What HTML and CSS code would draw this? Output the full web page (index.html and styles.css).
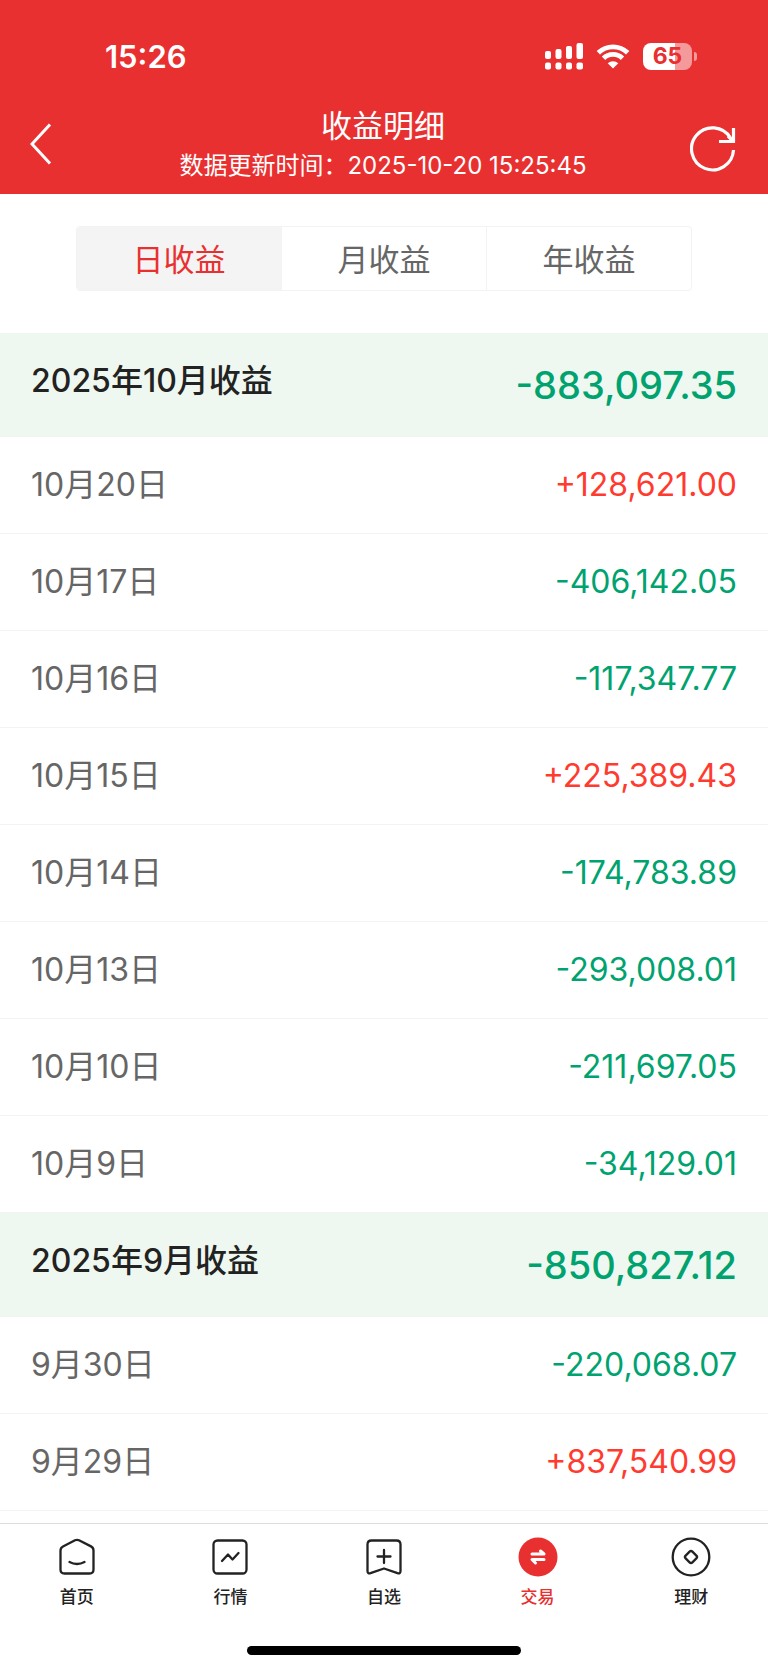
FILE: index.html
```
<!DOCTYPE html>
<html lang="zh-CN">
<head>
<meta charset="UTF-8">
<meta name="viewport" content="width=device-width, initial-scale=1.0">
<title>收益明细</title>
<link rel="stylesheet" href="styles.css">
</head>
<body>
<header class="header">
    <div class="status">
        <span class="clock">15:26</span>
        <div class="status-icons">
            <svg width="38" height="27" viewBox="0 0 38 27" fill="#fff">
                <rect x="0" y="8" width="6" height="8" rx="2"/>
                <rect x="10.5" y="6" width="6" height="10" rx="2"/>
                <rect x="21" y="3" width="6" height="13" rx="2"/>
                <rect x="31.5" y="0" width="6.5" height="16" rx="2"/>
                <rect x="0" y="19.5" width="6" height="7" rx="2"/>
                <rect x="10.5" y="19.5" width="6" height="7" rx="2"/>
                <rect x="21" y="19.5" width="6" height="7" rx="2"/>
                <rect x="31.5" y="19.5" width="6.5" height="7" rx="2"/>
            </svg>
            <svg width="34" height="27" viewBox="0 0 34 27">
                <path d="M2.3 9.800a21 21 0 0 1 29.4 0M7.500 15.300a13.500 13.500 0 0 1 19 0" fill="none" stroke="#fff" stroke-width="4.800"/>
                <path d="M17 25.5l-5.3-5.2a7.6 7.6 0 0 1 10.6 0z" fill="#fff"/>
            </svg>
            <div class="battery"><span>65</span></div>
        </div>
    </div>
    <div class="navbar">
        <button class="icon-btn" type="button" aria-label="返回">
            <svg width="22" height="42" viewBox="0 0 22 42" fill="none" stroke="#fff" stroke-width="3">
                <path d="M20 1.5L2 21l18 19.5"/>
            </svg>
        </button>
        <div class="heading">
            <h1>收益明细</h1>
            <p>数据更新时间：2025-10-20 15:25:45</p>
        </div>
        <button class="icon-btn refresh" type="button" aria-label="刷新">
            <svg width="46" height="46" viewBox="0 0 46 46" fill="none" stroke="#fff" stroke-width="3.200">
                <path d="M43.5 24A21 21 0 1 1 40.500 12"/>
                <path d="M43.500 2v13.500H29M43.500 15.500L38 10"/>
            </svg>
        </button>
    </div>
</header>

<main>
    <div class="tabs">
        <button class="active" type="button">日收益</button>
        <button type="button">月收益</button>
        <button type="button">年收益</button>
    </div>

    <table class="profit">
        <tbody>
            <tr class="month"><th>2025年10月收益</th><td class="down">-883,097.35</td></tr>
            <tr><th>10月20日</th><td class="up">+128,621.00</td></tr>
            <tr><th>10月17日</th><td class="down">-406,142.05</td></tr>
            <tr><th>10月16日</th><td class="down">-117,347.77</td></tr>
            <tr><th>10月15日</th><td class="up">+225,389.43</td></tr>
            <tr><th>10月14日</th><td class="down">-174,783.89</td></tr>
            <tr><th>10月13日</th><td class="down">-293,008.01</td></tr>
            <tr><th>10月10日</th><td class="down">-211,697.05</td></tr>
            <tr><th>10月9日</th><td class="down">-34,129.01</td></tr>
        </tbody>
        <tbody>
            <tr class="month"><th>2025年9月收益</th><td class="down">-850,827.12</td></tr>
            <tr><th>9月30日</th><td class="down">-220,068.07</td></tr>
            <tr><th>9月29日</th><td class="up">+837,540.99</td></tr>
        </tbody>
    </table>
</main>

<!-- bottom navigation -->
<footer class="footer">
    <nav class="tabbar">
        <a href="#">
            <svg width="40" height="40" viewBox="0 0 40 40">
                <path d="M3.500 13.500Q3.500 10.700 6 9.400L18 3.300Q20 2.300 22 3.300L34 9.400Q36.500 10.700 36.500 13.500V32.500Q36.500 36.500 32.500 36.500H7.500Q3.500 36.500 3.500 32.500Z"/>
                <path d="M12.500 25q7.500 4 15 0"/>
            </svg>
            首页
        </a>
        <a href="#">
            <svg width="40" height="40" viewBox="0 0 40 40">
                <rect x="3.500" y="3.500" width="33" height="33" rx="4"/>
                <path d="M12 24l6-6.500 4.500 5 6-6.500"/>
            </svg>
            行情
        </a>
        <a href="#">
            <svg width="40" height="40" viewBox="0 0 40 40">
                <path d="M7.500 3.500H32.500Q36.500 3.500 36.500 7.500V34Q36.500 37 33.500 36.200L20 31.500 6.500 36.200Q3.500 37 3.500 34V7.500Q3.500 3.500 7.500 3.500Z"/>
                <path d="M20 13v13M13.500 19.500h13"/>
            </svg>
            自选
        </a>
        <a class="active" href="#">
            <svg width="40" height="40" viewBox="0 0 40 40">
                <circle class="disc" cx="20" cy="20" r="19.500"/>
                <path class="arrows" d="M14 17h12l-3.500-3M26 22.500H14l3.500 3.500"/>
            </svg>
            交易
        </a>
        <a href="#">
            <svg width="40" height="40" viewBox="0 0 40 40">
                <circle cx="20" cy="20" r="18.300"/>
                <rect x="15.200" y="15.200" width="9.600" height="9.600" rx="2" transform="rotate(45 20 20)"/>
            </svg>
            理财
        </a>
    </nav>
    <div class="home-bar"></div>
</footer>
</body>
</html>
```
FILE: styles.css
```
:root{
    --red:#e93030;
    --up:#ff3b30;
    --down:#00a36f;
    --ink:#222;
    --muted:#666;
    --line:#f3f3f3;
}
*{box-sizing:border-box}
body{
    margin:0;
    min-height:100vh;
    display:flex;
    flex-direction:column;
    font-family:Inter,"Noto Sans CJK SC",sans-serif;
    background:#fff;
    color:var(--ink);
}
button{font:inherit;border:0;background:none;padding:0;cursor:pointer}

/* header */
.header{background:var(--red);color:#fff}
.status{
    display:flex;
    justify-content:space-between;
    align-items:center;
    height:104px;
    padding:9px 71px 0 105px;
}
.clock{font-size:31px;font-weight:600}
.status-icons{display:flex;align-items:center;gap:13px}
.battery{
    position:relative;
    width:49px;
    height:27px;
    margin-right:5px;
    border-radius:8px;
    background:linear-gradient(90deg,#fff 65%,#f59a9a 65%);
    color:var(--red);
    font-size:23px;
    font-weight:700;
    line-height:27px;
    text-align:center;
}
.battery::after{
    content:"";
    position:absolute;
    top:9px;
    right:-5px;
    width:3px;
    height:9px;
    border-radius:0 4px 4px 0;
    background:#f59a9a;
}
.navbar{
    display:flex;
    justify-content:space-between;
    align-items:center;
    height:90px;
    padding:0 32px 10px 30px;
}
.icon-btn{display:flex;width:46px;color:#fff}
.refresh{padding-top:10px}
.heading{text-align:center}
.heading h1{margin:0;font-size:31px;font-weight:400;line-height:44px}
.heading p{margin:0;font-size:24px;line-height:36px}

/* period tabs */
.tabs{
    display:flex;
    height:65px;
    margin:32px 76px 42px;
    border:1px solid var(--line);
    border-radius:4px;
    overflow:hidden;
}
.tabs button{flex:1;padding-bottom:3px;font-size:31px;color:var(--muted)}
.tabs button + button{border-left:1px solid var(--line)}
.tabs .active{background:#f4f4f4;color:var(--red)}

/* profit list */
.profit{width:100%;border-collapse:separate;border-spacing:0}
.profit th,.profit td{
    height:97px;
    padding:0 31px;
    border-bottom:1px solid var(--line);
    font-size:32px;
    font-weight:400;
    line-height:40px;
}
.profit th{text-align:left;color:var(--muted)}
.profit td{text-align:right}
.profit .month th,.profit .month td{
    height:104px;
    border-bottom:0;
    background:#eff8f0;
    font-weight:500;
}
.profit .month th{padding-bottom:8px;color:var(--ink)}
.profit .month td{font-size:38px}
.up{color:var(--up)}
.down{color:var(--down)}

/* bottom bar */
.footer{
    height:146px;
    margin-top:auto;
    border-top:1px solid #ddd;
    background:#fff;
}
.tabbar{display:flex;padding-top:13px}
.tabbar a{
    flex:1;
    display:flex;
    flex-direction:column;
    align-items:center;
    gap:8px;
    color:var(--ink);
    font-size:17px;
    font-weight:500;
    line-height:24px;
    text-decoration:none;
}
.tabbar svg{fill:none;stroke:currentColor;stroke-width:2.3;stroke-linecap:round;stroke-linejoin:round}
.tabbar .active{color:var(--red)}
.tabbar .disc{fill:currentColor;stroke:none}
.tabbar .arrows{stroke:#fff;stroke-width:3}
.home-bar{
    width:274px;
    height:9px;
    margin:37px auto 0;
    border-radius:5px;
    background:#000;
}
```
